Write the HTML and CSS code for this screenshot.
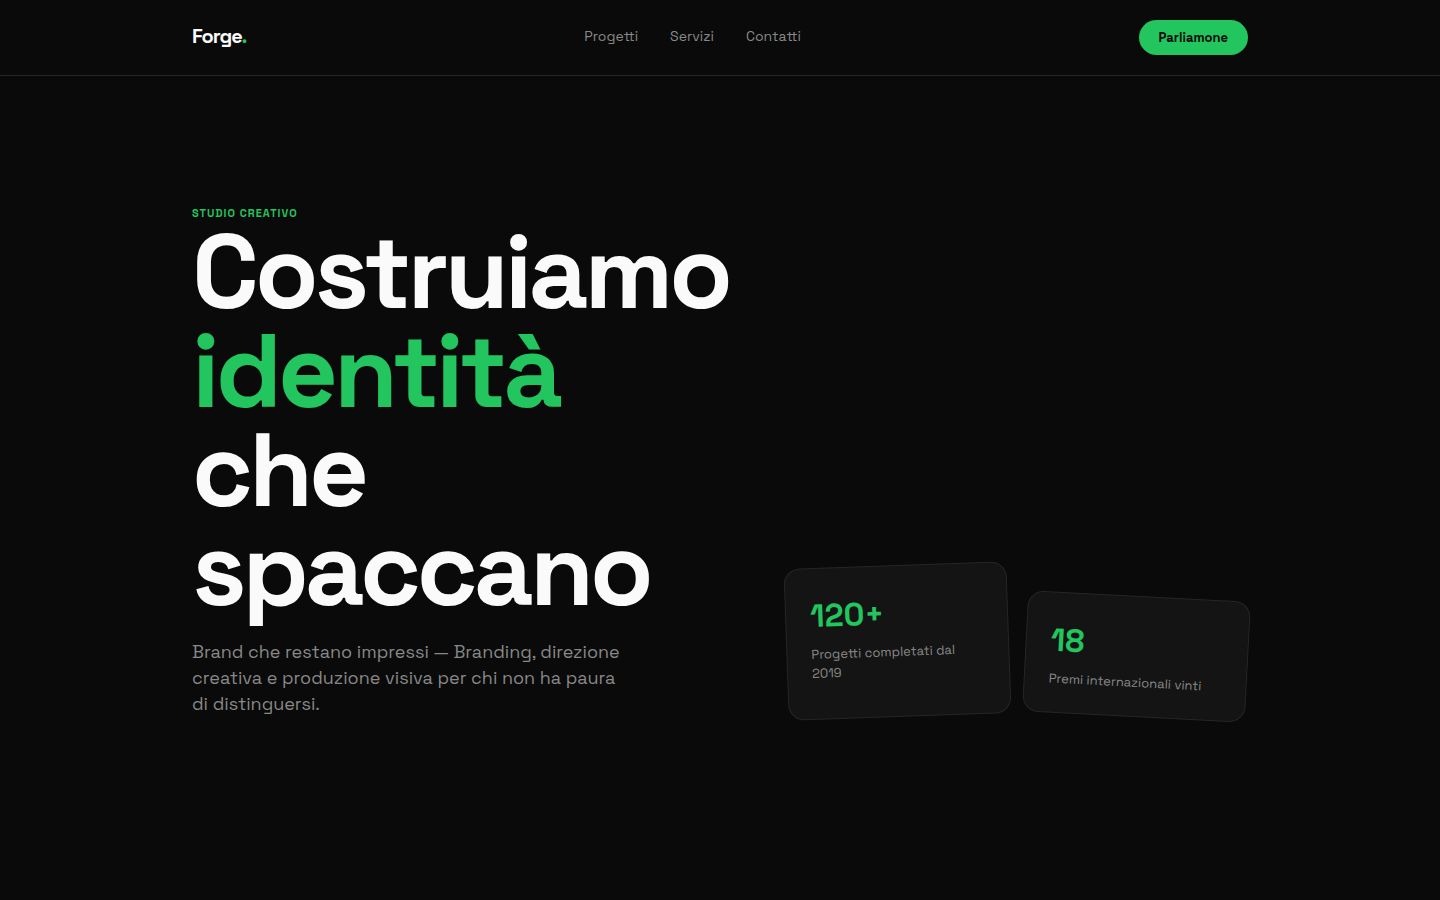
FILE: index.html
```html
<!DOCTYPE html>
<html lang="it">
<head>
  <meta charset="UTF-8" />
  <meta name="viewport" content="width=device-width, initial-scale=1.0"/>
  <title>Forge. Studio creativo</title>
  <link rel="stylesheet" href="styles.css">
</head>
<body>

<header class="site-header">
  <div class="container header-inner">
    <a href="#" class="logo">Forge<span class="accent">.</span></a>
    <nav class="nav">
      <a href="#progetti">Progetti</a>
      <a href="#servizi">Servizi</a>
      <a href="#contatti">Contatti</a>
    </nav>
    <button type="button" class="cta">Parliamone</button>
  </div>
</header>

<main class="container hero">
  <!-- Headline -->
  <div class="hero-text">
    <p class="eyebrow">Studio creativo</p>
    <h1>Costruiamo <span class="accent">identità</span> che spaccano</h1>
    <p class="lead">Brand che restano impressi — Branding, direzione creativa e produzione visiva per chi non ha paura di distinguersi.</p>
  </div>

  <!-- Stats -->
  <div class="stats">
    <div class="card card-left">
      <div class="number">120+</div>
      <p class="label">Progetti completati dal 2019</p>
    </div>
    <div class="card card-right">
      <div class="number">18</div>
      <p class="label">Premi internazionali vinti</p>
    </div>
  </div>
</main>

</body>
</html>
```
FILE: styles.css
```css
* {
  box-sizing: border-box;
}

body {
  margin: 0;
  font-family: "Space Grotesk", Inter, sans-serif;
  background: #0a0a0a;
  color: #fafafa;
}

h1,
p {
  margin: 0;
}

.container {
  max-width: 1104px;
  margin: 0 auto;
  padding: 0 24px;
}

.accent {
  color: #22c55e;
}

/* Header */
.site-header {
  border-bottom: 1px solid #262626;
}

.header-inner {
  display: flex;
  align-items: flex-start;
  justify-content: space-between;
  padding-top: 20px;
  padding-bottom: 20px;
}

.logo {
  color: #fafafa;
  font-size: 20px;
  font-weight: 700;
  line-height: 32px;
  letter-spacing: -1px;
  text-decoration: none;
}

.nav {
  display: flex;
  gap: 32px;
}

.nav a {
  color: #888;
  font-size: 14px;
  line-height: 32px;
  text-decoration: none;
}

.nav a:hover {
  color: #fafafa;
}

.cta {
  padding: 9px 20px;
  border: none;
  border-radius: 999px;
  background: #22c55e;
  color: #0a0a0a;
  font-family: inherit;
  font-size: 13px;
  font-weight: 700;
  line-height: 17px;
  cursor: pointer;
}

/* Hero */
.hero {
  display: grid;
  grid-template-columns: 13fr 11fr;
  gap: 48px;
  align-items: end;
  padding-top: 128px;
  padding-bottom: 128px;
}

.eyebrow {
  color: #22c55e;
  font-size: 11px;
  font-weight: 700;
  line-height: 19px;
  letter-spacing: 1px;
  text-transform: uppercase;
}

h1 {
  font-size: 104px;
  font-weight: 700;
  line-height: 99px;
  letter-spacing: -4px;
}

.lead {
  max-width: 440px;
  margin-top: 20px;
  color: #888;
  font-size: 18px;
  line-height: 26px;
}

.stats {
  display: grid;
  grid-template-columns: 1fr 1fr;
  gap: 16px;
  align-items: end;
}

.card {
  padding: 24px;
  border: 1px solid #262626;
  border-radius: 16px;
  background: #141414;
}

.card-left {
  padding-bottom: 36px;
  transform: rotate(-2deg);
}

.card-right {
  transform: rotate(3deg);
}

.number {
  color: #22c55e;
  font-size: 32px;
  font-weight: 700;
  line-height: 46px;
}

.label {
  margin-top: 6px;
  color: #888;
  font-size: 13px;
  line-height: 19px;
}
```
